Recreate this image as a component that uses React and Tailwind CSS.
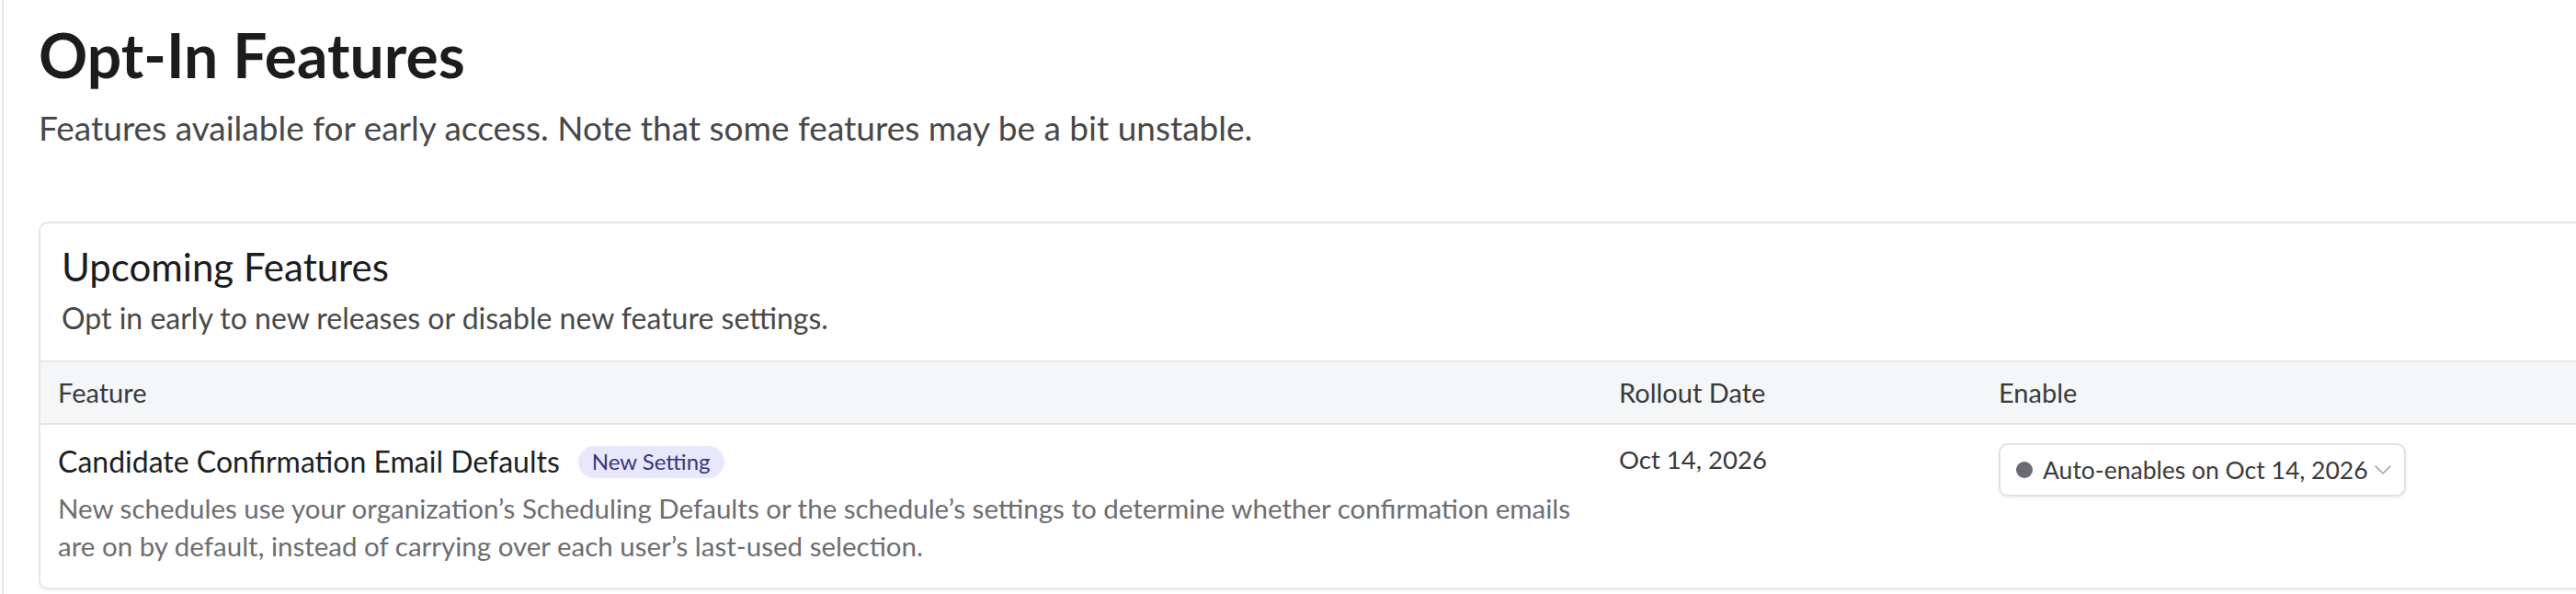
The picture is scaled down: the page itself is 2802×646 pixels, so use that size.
import React from 'react'

const features = [
  {
    name: 'Candidate Confirmation Email Defaults',
    badge: 'New Setting',
    description: [
      'New schedules use your organization’s Scheduling Defaults or the schedule’s settings to determine whether confirmation emails',
      'are on by default, instead of carrying over each user’s last-used selection.',
    ],
    rollout: 'Oct 14, 2026',
    status: 'Auto-enables on Oct 14, 2026',
  },
]

const Chevron = () => (
  <svg width="20" height="12" viewBox="0 0 20 12" fill="none" className="shrink-0">
    <polyline points="2,2 10,10 18,2" stroke="#a3a3a8" strokeWidth="1.6" strokeLinecap="round" strokeLinejoin="round" />
  </svg>
)

const EnableSelect = ({ label }) => (
  <div className="flex items-center w-[443px] h-[58px] pl-[17px] pr-[13px] border-2 border-[#e2e2e4] rounded-[10px] bg-white shadow-[0_2px_3px_rgba(0,0,0,0.06)]">
    <span className="w-[18px] h-[18px] rounded-full bg-[#6b6972] shrink-0" />
    <span className="ml-[11px] text-[26.5px] leading-[32px] text-[#3a3a3c] whitespace-nowrap">{label}</span>
    <span className="ml-auto">
      <Chevron />
    </span>
  </div>
)

const App = () => {
  return (
    <div className="w-full h-[646px] overflow-hidden bg-white font-['Lato',sans-serif]">
      <div className="ml-[2px] h-full border-l-2 border-[#e6e6e8] pl-[38px] w-[2900px]">
        {/* Page header */}
        <h1 className="pt-[20px] text-[66px] leading-[80px] font-bold text-[#1c1c1e]">Opt-In Features</h1>
        <p className="mt-[17px] text-[37px] leading-[44px] text-[#48484a]">
          Features available for early access. Note that some features may be a bit unstable.
        </p>

        {/* Upcoming features card */}
        <section className="mt-[80px] w-[2850px] border-2 border-[#e6e6e8] rounded-[10px] bg-white shadow-[0_2px_2px_rgba(0,0,0,0.05)]">
          <div className="pl-[23px] pt-[22px] pb-[26px]">
            <h2 className="text-[42px] leading-[50px] text-[#1c1c1e]">Upcoming Features</h2>
            <p className="mt-[11px] text-[32px] leading-[40px] text-[#48484a]">
              Opt in early to new releases or disable new feature settings.
            </p>
          </div>

          <div className="grid grid-cols-[1698px_413px_1fr] h-[70px] bg-[#f4f6f7] border-y-2 border-[#e6e6e8] text-[29px] leading-[66px] text-[#3a3a3c]">
            <div className="pl-[19px]">Feature</div>
            <div className="pl-[19px]">Rollout Date</div>
            <div className="pl-[19px]">Enable</div>
          </div>

          {features.map((f) => (
            <div key={f.name} className="grid grid-cols-[1698px_413px_1fr] pt-[20px] pb-[25px]">
              <div className="pl-[19px] pr-[19px]">
                <div className="flex items-center h-[40px]">
                  <span className="text-[32px] leading-[40px] text-[#1f1f21] whitespace-nowrap">{f.name}</span>
                  <span className="ml-[20px] h-[35px] px-[15px] flex items-center rounded-full bg-[#e8e7fb] text-[24px] text-[#37357c]">
                    {f.badge}
                  </span>
                </div>
                <p className="mt-[10px] text-[29.5px] leading-[41px] text-[#6d6d70]">
                  {f.description.map((line) => (
                    <span key={line} className="block whitespace-nowrap">
                      {line}
                    </span>
                  ))}
                </p>
              </div>
              <div className="pl-[19px] text-[27.5px] leading-[36px] text-[#3a3a3c]">{f.rollout}</div>
              <div className="pl-[19px]">
                <EnableSelect label={f.status} />
              </div>
            </div>
          ))}
        </section>
      </div>
    </div>
  )
}

export default App
